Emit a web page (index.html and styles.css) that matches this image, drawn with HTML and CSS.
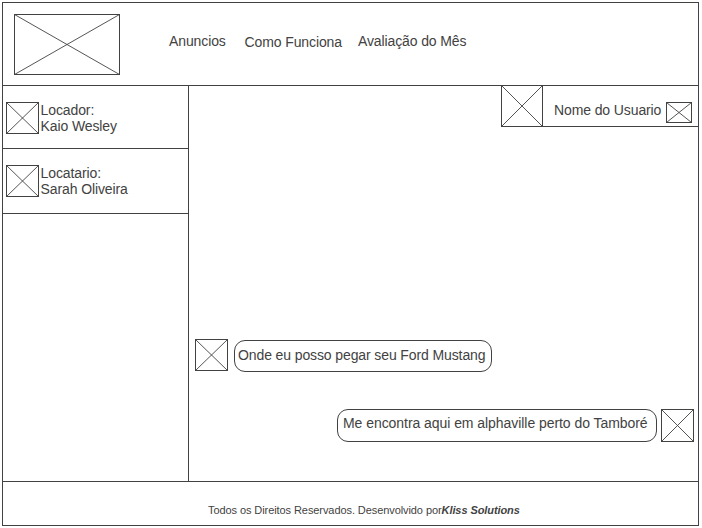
FILE: index.html
```html
<!DOCTYPE html>
<html lang="pt-BR">
<head>
<meta charset="utf-8">
<title>Kliss Solutions</title>
<link rel="stylesheet" href="styles.css">
</head>
<body>
<div class="frame">
  <header class="header">
    <svg class="logo" viewBox="0 0 106 61"><path class="cross" d="M.5 .5 105.5 60.5M105.5 .5 .5 60.5"/><rect x=".5" y=".5" width="105" height="60"/></svg>
    <nav class="nav">
      <a>Anuncios</a>
      <a class="nav-featured">Como Funciona</a>
      <a>Avaliação do Mês</a>
    </nav>
  </header>
  <div class="main">
    <aside class="sidebar">
      <div class="contact">
        <svg class="avatar" viewBox="0 0 33 32"><path class="cross" d="M.5 .5 32.5 31.5M32.5 .5 .5 31.5"/><rect x=".5" y=".5" width="32" height="31"/></svg>
        <p>Locador:<br>Kaio Wesley</p>
      </div>
      <div class="contact contact-tenant">
        <svg class="avatar" viewBox="0 0 33 32"><path class="cross" d="M.5 .5 32.5 31.5M32.5 .5 .5 31.5"/><rect x=".5" y=".5" width="32" height="31"/></svg>
        <p>Locatario:<br>Sarah Oliveira</p>
      </div>
    </aside>
    <section class="chat">
      <div class="user">
        <svg class="user-photo" viewBox="0 0 42 42"><path class="cross" d="M.5 .5 41.5 41.5M41.5 .5 .5 41.5"/><rect x=".5" y=".5" width="41" height="41"/></svg>
        <span class="user-name">Nome do Usuario</span>
        <svg class="user-menu" viewBox="0 0 26 21"><path class="cross" d="M.5 .5 25.5 20.5M25.5 .5 .5 20.5"/><rect x=".5" y=".5" width="25" height="20"/></svg>
      </div>
      <div class="message received">
        <svg class="avatar" viewBox="0 0 33 32"><path class="cross" d="M.5 .5 32.5 31.5M32.5 .5 .5 31.5"/><rect x=".5" y=".5" width="32" height="31"/></svg>
        <p class="bubble">Onde eu posso pegar seu Ford Mustang</p>
      </div>
      <div class="message sent">
        <p class="bubble">Me encontra aqui em alphaville perto do Tamboré</p>
        <svg class="avatar-tall" viewBox="0 0 33 33"><path class="cross" d="M.5 .5 32.5 32.5M32.5 .5 .5 32.5"/><rect x=".5" y=".5" width="32" height="32"/></svg>
      </div>
    </section>
  </div>
  <footer class="footer">Todos os Direitos Reservados. Desenvolvido por<strong>Kliss Solutions</strong></footer>
</div>
</body>
</html>
```
FILE: styles.css
```css
* {
  box-sizing: border-box;
}

body {
  margin: 0;
  padding: 2px;
  background: #fff;
  color: #424242;
  font: 14px/16px "Liberation Sans", Arial, sans-serif;
  letter-spacing: -0.11px;
}

p {
  margin: 0;
}

svg {
  display: block;
  flex: none;
  fill: none;
  stroke: #424242;
  stroke-width: 1;
}

.cross {
  stroke-width: 0.9;
}

.frame {
  display: flex;
  flex-direction: column;
  width: 697px;
  height: 524px;
  border: 1px solid #424242;
}

.header {
  display: flex;
  align-items: flex-start;
  height: 83px;
  padding: 11px 0 0 11px;
  border-bottom: 1px solid #424242;
}

.logo {
  width: 106px;
  height: 61px;
}

.nav {
  display: flex;
  padding: 19px 0 0 49px;
  white-space: nowrap;
}

.nav-featured {
  margin: 1px 16px 0 18.8px;
}

.main {
  display: flex;
  height: 396px;
  border-bottom: 1px solid #424242;
}

.sidebar {
  flex: none;
  width: 186px;
  border-right: 1px solid #424242;
}

.contact {
  display: flex;
  gap: 1.6px;
  height: 63px;
  padding: 16px 0 0 3px;
  border-bottom: 1px solid #424242;
}

.contact-tenant {
  height: 65px;
}

.avatar {
  width: 33px;
  height: 32px;
}

.avatar-tall {
  width: 33px;
  height: 33px;
}

.chat {
  display: flex;
  flex: 1;
  flex-direction: column;
}

.user {
  display: flex;
  align-self: flex-end;
  width: 197px;
  height: 42px;
  margin-top: -1px;
  border-bottom: 1px solid #424242;
}

.user-photo {
  width: 42px;
  height: 42px;
}

.user-name {
  width: 112px;
  margin: 17px 0 0 11px;
}

.user-menu {
  width: 26px;
  height: 21px;
  margin-top: 17px;
}

.message {
  display: flex;
  white-space: nowrap;
}

.received {
  gap: 6px;
  margin: 212px 0 0 6px;
}

.bubble {
  border: 1px solid #424242;
  border-radius: 11px;
}

.received .bubble {
  width: 258px;
  height: 32px;
  margin-top: 1px;
  padding: 6px 0 0 3px;
}

.sent {
  gap: 4px;
  align-self: flex-end;
  margin: 37px 4px 0 0;
}

.sent .bubble {
  width: 320px;
  height: 33px;
  padding: 5px 0 0 5px;
  letter-spacing: -0.055px;
}

.footer {
  padding: 22px 0 0 205px;
  font-size: 11px;
  line-height: 12px;
  letter-spacing: -0.08px;
  white-space: nowrap;
}

.footer strong {
  font-style: italic;
}
```
